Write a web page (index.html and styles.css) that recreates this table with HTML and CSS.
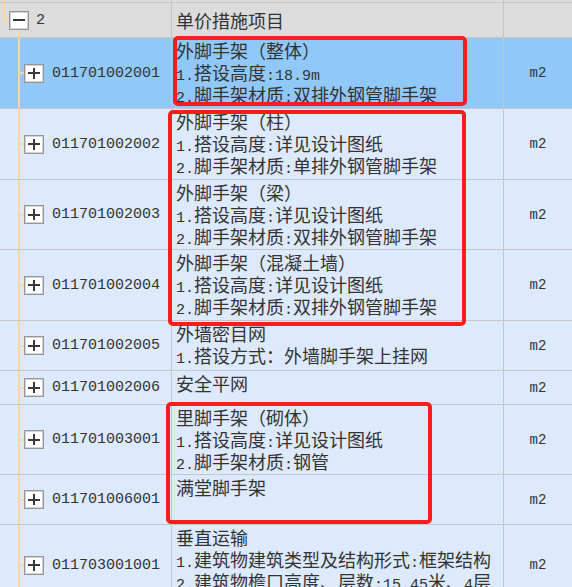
FILE: index.html
```html
<!DOCTYPE html>
<html lang="zh-CN">
<head>
<meta charset="utf-8">
<title>单价措施项目</title>
<link rel="stylesheet" href="styles.css">
</head>
<body>
<div class="sheet">
  <div class="grid">
    <div class="cell tree tree-top"></div><div class="cell hd"></div><div class="cell hd"></div>

    <div class="cell hd tree tree-group"><span class="pm minus"></span><span class="code">2</span></div>
    <div class="cell hd desc desc-hd">单价措施项目</div>
    <div class="cell hd"></div>

    <div class="cell sel tree"><span class="pm"></span><span class="code">011701002001</span></div>
    <div class="cell sel desc">外脚手架（整体）<br><span class="h">1.</span>搭设高度<span class="h">:18.9m</span><br><span class="h">2.</span>脚手架材质<span class="h">:</span>双排外钢管脚手架</div>
    <div class="cell sel unit">m2</div>

    <div class="cell tree"><span class="pm"></span><span class="code">011701002002</span></div>
    <div class="cell desc">外脚手架（柱）<br><span class="h">1.</span>搭设高度<span class="h">:</span>详见设计图纸<br><span class="h">2.</span>脚手架材质<span class="h">:</span>单排外钢管脚手架</div>
    <div class="cell unit">m2</div>

    <div class="cell tree"><span class="pm"></span><span class="code">011701002003</span></div>
    <div class="cell desc">外脚手架（梁）<br><span class="h">1.</span>搭设高度<span class="h">:</span>详见设计图纸<br><span class="h">2.</span>脚手架材质<span class="h">:</span>双排外钢管脚手架</div>
    <div class="cell unit">m2</div>

    <div class="cell tree"><span class="pm"></span><span class="code">011701002004</span></div>
    <div class="cell desc">外脚手架（混凝土墙）<br><span class="h">1.</span>搭设高度<span class="h">:</span>详见设计图纸<br><span class="h">2.</span>脚手架材质<span class="h">:</span>双排外钢管脚手架</div>
    <div class="cell unit">m2</div>

    <div class="cell tree"><span class="pm"></span><span class="code">011701002005</span></div>
    <div class="cell desc">外墙密目网<br><span class="h">1.</span>搭设方式：外墙脚手架上挂网</div>
    <div class="cell unit">m2</div>

    <div class="cell tree"><span class="pm"></span><span class="code">011701002006</span></div>
    <div class="cell desc">安全平网</div>
    <div class="cell unit">m2</div>

    <div class="cell tree"><span class="pm"></span><span class="code">011701003001</span></div>
    <div class="cell desc">里脚手架（砌体）<br><span class="h">1.</span>搭设高度<span class="h">:</span>详见设计图纸<br><span class="h">2.</span>脚手架材质<span class="h">:</span>钢管</div>
    <div class="cell unit">m2</div>

    <div class="cell tree"><span class="pm"></span><span class="code">011701006001</span></div>
    <div class="cell desc">满堂脚手架</div>
    <div class="cell unit">m2</div>

    <div class="cell tree"><span class="pm"></span><span class="code">011703001001</span></div>
    <div class="cell desc">垂直运输<br><span class="h">1.</span>建筑物建筑类型及结构形式<span class="h">:</span>框架结构<br><span class="h">2.</span>建筑物檐口高度、层数<span class="h">:15.45</span>米、<span class="h">4</span>层</div>
    <div class="cell unit">m2</div>
  </div>

  <div class="mark mark-1"></div>
  <div class="mark mark-2"></div>
  <div class="mark mark-3"></div>
</div>
</body>
</html>
```

FILE: styles.css
```css
html, body {
  margin: 0;
  padding: 0;
  background: #dde9fc;
  overflow: hidden;
}

.sheet {
  position: relative;
  width: 572px;
  height: 587px;
  overflow: hidden;
}

.grid {
  display: grid;
  grid-template-columns: 171px 331px 68px;
  grid-template-rows: 2px 34px 70px 70px 69px 70px 49px 33px 69px 49px 80px;
  gap: 1px;
  background: #c6c6c6;
}

.cell {
  background: #dde9fc;
  overflow: hidden;
  min-width: 0;
  color: #333;
}

.hd { background-color: #dcdcdc; }
.sel { background-color: #90c8f7; }

/* tree column: connector lines drawn as background layers */
.tree {
  display: flex;
  align-items: center;
  gap: 8px;
  padding-left: 24px;
  background-image:
    linear-gradient(#fbd6a2, #fbd6a2),
    linear-gradient(#fbd6a2, #fbd6a2);
  background-repeat: no-repeat;
  background-position: 18px 0, 18px 50%;
  background-size: 2px 100%, 6px 2px;
}

.tree-top {
  background-color: #dcdcdc;
  background-image: linear-gradient(#fbd6a2, #fbd6a2);
  background-position: 3px 0;
  background-size: 2px 100%;
}

.tree.tree-group {
  padding-left: 9px;
  gap: 7px;
  background-image:
    linear-gradient(#fbd6a2, #fbd6a2),
    linear-gradient(#fbd6a2, #fbd6a2),
    linear-gradient(#fbd6a2, #fbd6a2);
  background-position: 3px 0, 3px 50%, 18px 100%;
  background-size: 2px 50%, 6px 2px, 2px 50%;
}

.pm {
  flex: none;
  box-sizing: border-box;
  width: 20px;
  height: 19px;
  border: 1px solid #959595;
  box-shadow: inset 0 0 0 1px #d4d4d4;
  background-color: #fff;
  background-image:
    linear-gradient(#3a3a3a, #3a3a3a),
    linear-gradient(#3a3a3a, #3a3a3a);
  background-repeat: no-repeat;
  background-position: center, center;
  background-size: 12px 2px, 2px 11px;
}

.pm.minus {
  background-image: linear-gradient(#3a3a3a, #3a3a3a);
  background-size: 12px 2px;
}

.code {
  font-family: "Liberation Mono", monospace;
  font-size: 15px;
  color: #333;
  white-space: nowrap;
}

.desc {
  box-sizing: border-box;
  padding: 1px 0 0 4px;
  font-family: "Noto Sans CJK SC", sans-serif;
  font-size: 18px;
  line-height: 22px;
  white-space: nowrap;
  color: #333;
}

.desc-hd {
  display: flex;
  align-items: center;
  padding-top: 0;
}

.h {
  font-family: "Liberation Mono", monospace;
  font-size: 15px;
  line-height: 0;
}

.unit {
  display: flex;
  align-items: center;
  justify-content: center;
  font-family: "Liberation Mono", monospace;
  font-size: 14px;
  color: #333;
}

/* red annotation boxes drawn over the sheet */
.mark {
  position: absolute;
  box-sizing: border-box;
  border: 4px solid #fa1c1c;
  border-radius: 5px;
}

.mark-1 { left: 173px; top: 36px; width: 294px; height: 70px; }
.mark-2 { left: 168px; top: 110px; width: 298px; height: 216px; }
.mark-3 { left: 166px; top: 402px; width: 266px; height: 122px; }
```
